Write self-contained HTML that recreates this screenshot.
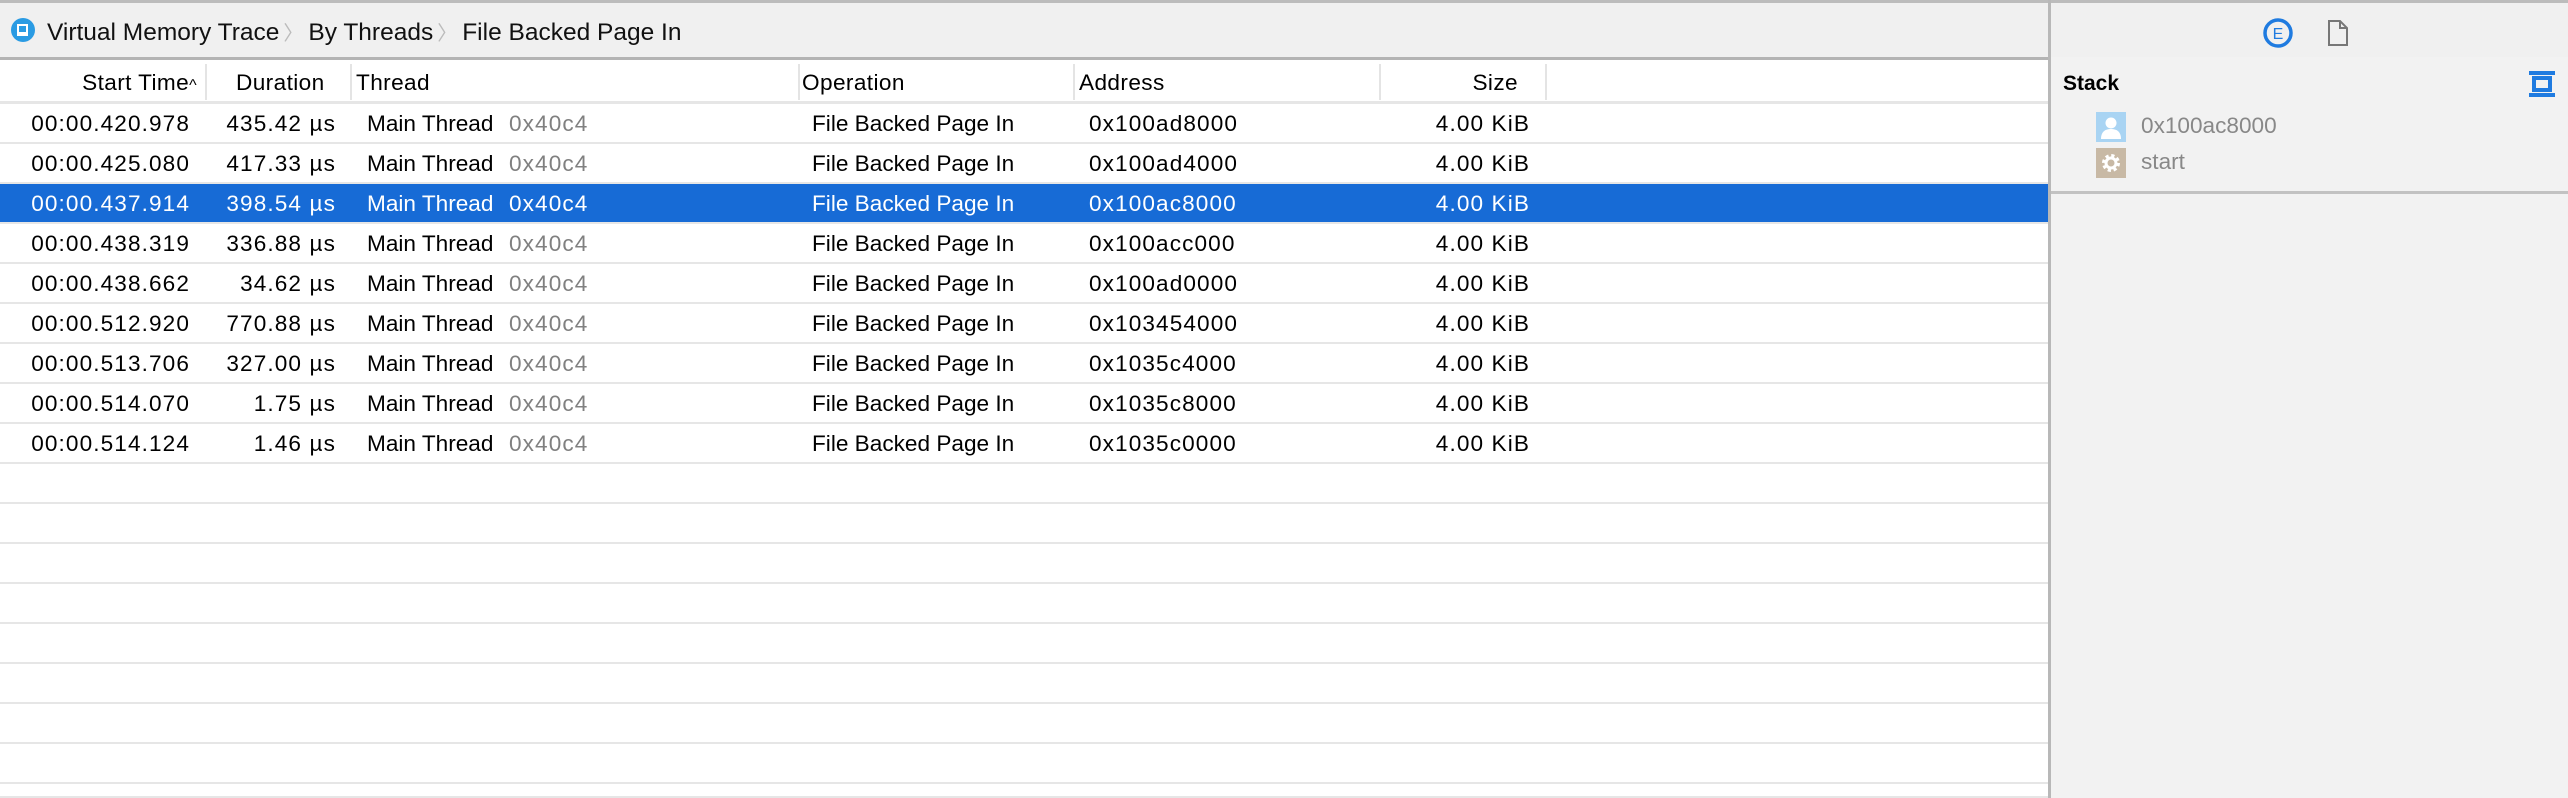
<!DOCTYPE html>
<html style="width:2568px;height:798px;overflow:hidden"><head><meta charset="utf-8"><style>
*{margin:0;padding:0;box-sizing:border-box}
body{width:2568px;height:798px;overflow:hidden;background:#fff;font-family:"Liberation Sans",sans-serif;font-size:22.6px;color:#000;position:relative}
.tb{position:absolute;left:0;top:0;width:2568px;height:60px;background:#f0f0f0;border-top:3px solid #bcbcbc;border-bottom:3px solid #b4b4b4}
.crumb{position:absolute;top:14px;left:47px;font-size:24.5px;color:#111;white-space:nowrap}
.crumb .s{color:#bbb;margin:0 5px 0 4px;font-size:20px}
.hdr{position:absolute;top:60px;left:0;width:2048px;height:44px;background:#fff;border-bottom:3px solid #e6e6e6}
.hdr div{position:absolute;top:10px;white-space:nowrap;letter-spacing:0.4px}
.vs{position:absolute;top:64px;width:2px;height:36px;background:#e4e4e4}
.row{position:absolute;left:0;width:2048px;height:40px;border-bottom:2px solid #e6e6e6}
.row div{position:absolute;top:7px;white-space:nowrap}
.n{letter-spacing:1.1px}
.r{text-align:right}
.sel{background:#176bd6;color:#fff}
.g{color:#808080}
.sel .g{color:#fff}
.rp{position:absolute;left:2048px;top:57px;width:520px;height:741px;background:#f2f2f2;border-left:3px solid #b8b8b8}
.rpt{position:absolute;left:2048px;top:0;height:60px;border-left:3px solid #b8b8b8}
</style></head><body>
<div class="tb">
  <svg style="position:absolute;left:10px;top:14px" width="26" height="26" viewBox="0 0 26 26"><circle cx="13" cy="13" r="12" fill="#2a9be3"/><rect x="7" y="7" width="11" height="12" fill="#fff"/><rect x="9" y="9" width="7" height="6" fill="#2a9be3"/></svg>
  <div class="crumb">Virtual Memory Trace<span class="s">〉</span>By Threads<span class="s">〉</span>File Backed Page In</div>
</div>
<div class="rpt"></div>
<svg style="position:absolute;left:2262px;top:17px" width="32" height="32" viewBox="0 0 32 32"><circle cx="16" cy="16" r="13" fill="none" stroke="#1f7be0" stroke-width="3.5"/><text x="16" y="22" font-family="Liberation Sans" font-size="16" text-anchor="middle" fill="#1f7be0">E</text></svg>
<svg style="position:absolute;left:2327px;top:19px" width="22" height="28" viewBox="0 0 22 28"><path d="M2 2H13L20 9V26H2Z" fill="none" stroke="#777" stroke-width="2"/><path d="M13 2V9H20" fill="none" stroke="#777" stroke-width="2"/></svg>
<div class="hdr">
  <div class="r" style="right:1851px">Start Time<span style="font-size:16px">^</span></div>
  <div style="left:236px">Duration</div>
  <div style="left:356px">Thread</div>
  <div style="left:802px">Operation</div>
  <div style="left:1079px">Address</div>
  <div class="r" style="right:530px">Size</div>
</div>
<div class="vs" style="left:205px"></div><div class="vs" style="left:350px"></div><div class="vs" style="left:798px"></div><div class="vs" style="left:1073px"></div><div class="vs" style="left:1379px"></div><div class="vs" style="left:1545px"></div>
<div class="row" style="top:104px"><div class="r n" style="right:1858px">00:00.420.978</div><div class="r n" style="right:1712px">435.42 µs</div><div style="left:367px">Main Thread</div><div class="g n" style="left:509px">0x40c4</div><div style="left:812px">File Backed Page In</div><div class="n" style="left:1089px">0x100ad8000</div><div class="r n" style="right:518px">4.00 KiB</div></div>
<div class="row" style="top:144px"><div class="r n" style="right:1858px">00:00.425.080</div><div class="r n" style="right:1712px">417.33 µs</div><div style="left:367px">Main Thread</div><div class="g n" style="left:509px">0x40c4</div><div style="left:812px">File Backed Page In</div><div class="n" style="left:1089px">0x100ad4000</div><div class="r n" style="right:518px">4.00 KiB</div></div>
<div class="row sel" style="top:184px"><div class="r n" style="right:1858px">00:00.437.914</div><div class="r n" style="right:1712px">398.54 µs</div><div style="left:367px">Main Thread</div><div class="g n" style="left:509px">0x40c4</div><div style="left:812px">File Backed Page In</div><div class="n" style="left:1089px">0x100ac8000</div><div class="r n" style="right:518px">4.00 KiB</div></div>
<div class="row" style="top:224px"><div class="r n" style="right:1858px">00:00.438.319</div><div class="r n" style="right:1712px">336.88 µs</div><div style="left:367px">Main Thread</div><div class="g n" style="left:509px">0x40c4</div><div style="left:812px">File Backed Page In</div><div class="n" style="left:1089px">0x100acc000</div><div class="r n" style="right:518px">4.00 KiB</div></div>
<div class="row" style="top:264px"><div class="r n" style="right:1858px">00:00.438.662</div><div class="r n" style="right:1712px">34.62 µs</div><div style="left:367px">Main Thread</div><div class="g n" style="left:509px">0x40c4</div><div style="left:812px">File Backed Page In</div><div class="n" style="left:1089px">0x100ad0000</div><div class="r n" style="right:518px">4.00 KiB</div></div>
<div class="row" style="top:304px"><div class="r n" style="right:1858px">00:00.512.920</div><div class="r n" style="right:1712px">770.88 µs</div><div style="left:367px">Main Thread</div><div class="g n" style="left:509px">0x40c4</div><div style="left:812px">File Backed Page In</div><div class="n" style="left:1089px">0x103454000</div><div class="r n" style="right:518px">4.00 KiB</div></div>
<div class="row" style="top:344px"><div class="r n" style="right:1858px">00:00.513.706</div><div class="r n" style="right:1712px">327.00 µs</div><div style="left:367px">Main Thread</div><div class="g n" style="left:509px">0x40c4</div><div style="left:812px">File Backed Page In</div><div class="n" style="left:1089px">0x1035c4000</div><div class="r n" style="right:518px">4.00 KiB</div></div>
<div class="row" style="top:384px"><div class="r n" style="right:1858px">00:00.514.070</div><div class="r n" style="right:1712px">1.75 µs</div><div style="left:367px">Main Thread</div><div class="g n" style="left:509px">0x40c4</div><div style="left:812px">File Backed Page In</div><div class="n" style="left:1089px">0x1035c8000</div><div class="r n" style="right:518px">4.00 KiB</div></div>
<div class="row" style="top:424px"><div class="r n" style="right:1858px">00:00.514.124</div><div class="r n" style="right:1712px">1.46 µs</div><div style="left:367px">Main Thread</div><div class="g n" style="left:509px">0x40c4</div><div style="left:812px">File Backed Page In</div><div class="n" style="left:1089px">0x1035c0000</div><div class="r n" style="right:518px">4.00 KiB</div></div>
<div class="row" style="top:464px"></div><div class="row" style="top:504px"></div><div class="row" style="top:544px"></div><div class="row" style="top:584px"></div><div class="row" style="top:624px"></div><div class="row" style="top:664px"></div><div class="row" style="top:704px"></div><div class="row" style="top:744px"></div><div class="row" style="top:784px;height:14px"></div>
<div class="rp">
  <div style="position:absolute;left:12px;top:15px;font-weight:bold;font-size:21px">Stack</div>
  <svg style="position:absolute;left:478px;top:14px" width="26" height="26" viewBox="0 0 26 26"><rect x="0" y="0" width="26" height="4" fill="#1f7be0"/><rect x="0" y="22" width="26" height="4" fill="#1f7be0"/><rect x="5" y="7" width="16" height="12" fill="none" stroke="#1f7be0" stroke-width="4"/></svg>
  <svg style="position:absolute;left:45px;top:55px" width="30" height="30" viewBox="0 0 30 30"><rect width="30" height="30" fill="#a9d4f3"/><circle cx="15" cy="11" r="5.5" fill="#fff"/><path d="M5 27C5 19 10 17 15 17S25 19 25 27Z" fill="#fff"/></svg>
  <div style="position:absolute;left:90px;top:56px;color:#888">0x100ac8000</div>
  <svg style="position:absolute;left:45px;top:91px" width="30" height="30" viewBox="0 0 30 30"><rect width="30" height="30" fill="#c8b9a5"/><circle cx="15" cy="15" r="7" fill="none" stroke="#fff" stroke-width="4" stroke-dasharray="3 2.5"/><circle cx="15" cy="15" r="5" fill="none" stroke="#fff" stroke-width="3"/></svg>
  <div style="position:absolute;left:90px;top:92px;color:#888">start</div>
  <div style="position:absolute;left:0;top:134px;width:520px;height:3px;background:#c2c2c2"></div>
</div>
</body></html>
